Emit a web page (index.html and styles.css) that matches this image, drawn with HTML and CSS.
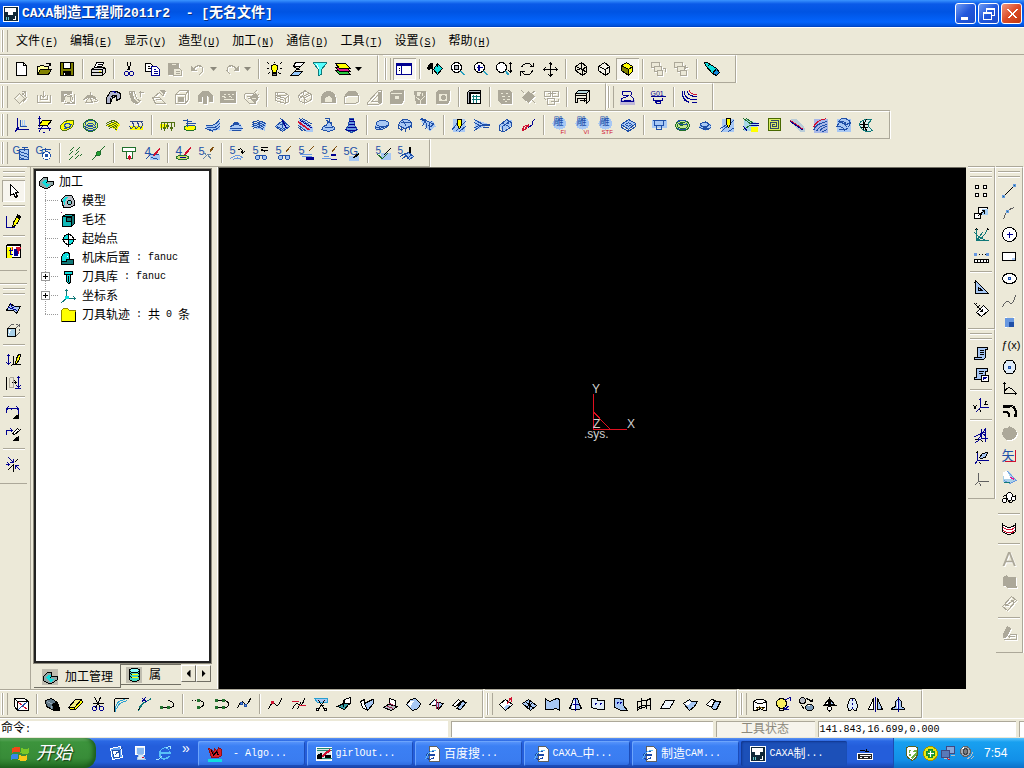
FILE: index.html
```
<!DOCTYPE html>
<html lang="zh-CN">
<head>
    <meta charset="UTF-8">
    <meta name="viewport" content="width=device-width, initial-scale=1.0">
    <title>CAXA制造工程师2011r2</title>
    <link rel="stylesheet" href="styles.css">
</head>
<body>
    <header class="title-bar">
        <span class="app-icon" data-icon="app"></span>
        <h1 class="title">CAXA<span class="zh">制造工程师</span>2011r2&nbsp; - [<span class="zh">无名文件</span>]</h1>
        <button class="win-button" aria-label="最小化" data-icon="winMin"></button>
        <button class="win-button" aria-label="还原" data-icon="winRestore"></button>
        <button class="win-button close" aria-label="关闭" data-icon="winClose"></button>
    </header>

    <nav class="menu-bar">
        <span class="grip"></span>
        <button class="menu">文件<span class="en">(<u>F</u>)</span></button>
        <button class="menu">编辑<span class="en">(<u>E</u>)</span></button>
        <button class="menu">显示<span class="en">(<u>V</u>)</span></button>
        <button class="menu">造型<span class="en">(<u>U</u>)</span></button>
        <button class="menu">加工<span class="en">(<u>N</u>)</span></button>
        <button class="menu">通信<span class="en">(<u>D</u>)</span></button>
        <button class="menu">工具<span class="en">(<u>T</u>)</span></button>
        <button class="menu">设置<span class="en">(<u>S</u>)</span></button>
        <button class="menu">帮助<span class="en">(<u>H</u>)</span></button>
    </nav>

    <div class="toolbar-row spaced">
        <div class="toolbar" data-tools="new open save | print | cut copy !paste !undo^ !redo^ | bulb layer funnel colors^"></div>
        <div class="toolbar" data-tools="*window | redraw zoomFit zoomIn zoomDyn rotate pan | wire hidden *shade | !cascadeA !cascadeB | torch"></div>
    </div>
    <div class="toolbar-row">
        <div class="toolbar" data-tools="!exDiamond !exCut !exRev !exFan loft !sweep !exUp !box !fillet !film !chamfer | !slab !gem !dome !shell !rib !pocket !draftA !hole | table | !dotsA !rhomb !gridBox | mould"></div>
        <div class="toolbar" data-tools="wedge | g01 | bend"></div>
    </div>
    <div class="toolbar-row">
        <div class="toolbar" data-tools="axes planes disc spiral layers hooks | drops cup swoop dome3 waves pyramid stripes hat tower | coins crown fan | pen mesh bars squig | carveF carveV carveS diamond | cutter rings dome4 penB meshB maze slash arcs folds horn"></div>
    </div>
    <div class="toolbar-row">
        <div class="toolbar" data-tools="gDrill gWheel | hatch dotLine | tee four | fourEye five | fiveArc fiveGlasses fiveEyes fiveStep fiveFlat fiveG | fiveCheck fiveBrush"></div>
    </div>

    <main class="workspace">
        <div class="side">
            <div class="toolbar vertical" data-tools="*pointer | sketch | logoT"></div>
            <div class="toolbar vertical" data-tools="patch cube | dimPen dimMove | dimAngle dimEdit | converge"></div>
        </div>

        <section class="dock">
            <div class="tree-box">
                <div class="tree-root"><span data-icon="part"></span>加工</div>
                <ul class="tree">
                    <li><span data-icon="model"></span>模型</li>
                    <li><span data-icon="blank"></span>毛坯</li>
                    <li><span data-icon="target"></span>起始点</li>
                    <li><span data-icon="machine"></span>机床后置<span class="en"> : fanuc</span></li>
                    <li><button class="expander" aria-label="展开刀具库"></button><span data-icon="tool"></span>刀具库<span class="en"> : fanuc</span></li>
                    <li><button class="expander" aria-label="展开坐标系"></button><span data-icon="coords"></span>坐标系</li>
                    <li><span data-icon="folder"></span>刀具轨迹<span class="en"> : </span>共<span class="en"> 0 </span>条</li>
                </ul>
            </div>
            <div class="tabs">
                <button class="tab active"><span data-icon="part"></span>加工管理</button>
                <button class="tab"><span data-icon="stack"></span>属</button>
                <button class="tab-arrow" aria-label="向左"><span class="arrow left"></span></button>
                <button class="tab-arrow" aria-label="向右"><span class="arrow right"></span></button>
            </div>
        </section>

        <section class="viewport">
            <svg class="origin" viewBox="0 0 120 120" width="120" height="120">
                <path d="M60.5 25V60.5H94M60.5 43L77 60" />
                <text x="59" y="24">Y</text>
                <text x="94" y="59">X</text>
                <text x="60" y="59">Z</text>
                <text x="51" y="69">.sys.</text>
            </svg>
        </section>

        <div class="side right">
            <div class="side-column">
                <div class="toolbar vertical" data-tools="array scale curves measure | square ruler"></div>
                <div class="toolbar vertical" data-tools="script scriptEdit | ucs | ucsSplit ucsPick ucsDim"></div>
            </div>
            <div class="side-column">
                <div class="toolbar vertical" data-tools="line arc circle rect ellipse spline point fx polygon conic offset !region vector project helix | surfaceB | !letterA !blob !tag | !noteDim"></div>
            </div>
        </div>
    </main>

    <div class="toolbar-row bottom">
        <div class="toolbar" data-tools="crossBox | blackBox eraser trim corner trimDot joinA | joinB joinC nurbs | nurbsRed nurbsBar scissors surfA surfB surfC surfD surfE surfF"></div>
        <div class="toolbar" data-tools="planeRed planeNet sheet cone sheetDot sheetCut frame flat leaf twin"></div>
        <div class="toolbar" data-tools="drum bulbMove twoBalls mirrorUp capsule mirror bell"></div>
    </div>

    <div class="status-bar">
        <div class="command">
            <label for="command" class="command-label">命令<span class="en">:</span></label>
            <input id="command" type="text">
        </div>
        <div class="hint"></div>
        <div class="tool-state">工具状态</div>
        <div class="position en">141.843,16.699,0.000</div>
        <div class="status-end"></div>
    </div>

    <footer class="taskbar">
        <button class="start"><span data-icon="flag"></span>开始</button>
        <div class="quick-launch">
            <button aria-label="桌面" data-icon="desktop"></button>
            <button aria-label="信使" data-icon="pda"></button>
            <button aria-label="浏览器" data-icon="ie"></button>
            <span class="more">»</span>
        </div>
        <div class="tasks">
            <button class="task"><span data-icon="redLogo"></span><span class="en"> - Algo...</span></button>
            <button class="task"><span data-icon="chart"></span><span class="en">girlOut...</span></button>
            <button class="task"><span data-icon="iePage"></span>百度搜<span class="en">...</span></button>
            <button class="task"><span data-icon="iePage"></span><span class="en">CAXA_</span>中<span class="en">...</span></button>
            <button class="task"><span data-icon="iePage"></span>制造<span class="en">CAM...</span></button>
            <button class="task active"><span data-icon="app"></span><span class="en">CAXA</span>制<span class="en">...</span></button>
        </div>
        <button class="keyboard" aria-label="输入法" data-icon="keyboard"></button>
        <div class="tray">
            <span data-icon="shield"></span>
            <span data-icon="plusBall"></span>
            <span data-icon="network"></span>
            <span data-icon="speaker"></span>
            <time class="clock">7:54</time>
        </div>
    </footer>

    <script src="icons.js"></script>
</body>
</html>
```
FILE: styles.css
```
* {
    box-sizing: border-box;
}
body {
    margin: 0;
    height: 100vh;
    display: flex;
    flex-direction: column;
    overflow: hidden;
    background-color: #ece9d8;
    color: #000;
    font-family: "Liberation Sans", "Noto Sans CJK SC", sans-serif;
    font-size: 12px;
    line-height: 16px;
}
button {
    padding: 0;
    border: none;
    background: none;
    color: inherit;
    font: inherit;
    white-space: nowrap;
}
svg {
    display: block;
    flex: none;
}
.en {
    font-family: "Liberation Mono", monospace;
    font-size: 10px;
    white-space: pre;
}

/* title bar */
.title-bar {
    flex: none;
    display: flex;
    align-items: center;
    gap: 2px;
    height: 27px;
    padding: 0 2px 0 3px;
    background: linear-gradient(#3a94ff 0, #0a5ae8 4px, #0054e3 12px, #0464fc 22px, #0050d8 26px, #003cb4 27px);
    color: #fff;
}
.title {
    flex: 1;
    margin: 0;
    padding-left: 1px;
    font-family: "Liberation Mono", "Noto Sans CJK SC", monospace;
    font-size: 13px;
    font-weight: bold;
    line-height: 20px;
    text-shadow: 1px 1px 0 #0a3080;
}
.title .zh {
    font-size: 14px;
}
.win-button {
    display: flex;
    align-items: center;
    justify-content: center;
    width: 21px;
    height: 21px;
    border: 1px solid #fff;
    border-radius: 3px;
    background: linear-gradient(135deg, #6f9cf4, #2258dc 50%, #1c4cc8);
}
.win-button.close {
    background: linear-gradient(135deg, #f09880, #dc4c28 50%, #c03810);
}

/* menu */
.menu-bar {
    flex: none;
    display: flex;
    align-items: center;
    height: 28px;
    padding-left: 2px;
    border-top: 1px solid #fff;
    border-bottom: 1px solid #aca899;
}
.menu {
    padding: 1px 6px 0;
}

/* toolbars */
.grip {
    flex: none;
    width: 6px;
    height: 22px;
    margin-right: 2px;
    border: solid #aca899;
    border-width: 0 1px;
    box-shadow: inset 1px 0 0 #fff, inset -2px 0 0 #ece9d8, -1px 0 0 #fff;
}
.toolbar-row {
    flex: none;
    display: flex;
    height: 28px;
}
.toolbar-row.spaced {
    gap: 5px;
}
.toolbar-row.bottom {
    gap: 2px;
}
.toolbar {
    display: flex;
    align-items: center;
    padding: 0 11px 0 2px;
    border-top: 1px solid #fff;
    border-right: 1px solid #aca899;
    border-bottom: 1px solid #aca899;
    box-shadow: 0 -1px 0 #aca899, 1px 0 0 #fff;
}
.tool {
    display: flex;
    align-items: center;
    height: 22px;
    padding: 0 4px 0 3px;
}
.tool[aria-pressed="true"] {
    background-color: #f7f5ee;
    box-shadow: inset 1px 1px 0 #aca899, inset -1px -1px 0 #fff;
}
.tool:disabled svg {
    filter: drop-shadow(1px 1px 0 #fff);
}
.tool .arrow {
    margin-left: 4px;
}
.tool:disabled .arrow {
    color: #8c897c;
}
.tool.drop {
    width: 34px;
    padding-right: 0;
}
.separator {
    width: 2px;
    height: 20px;
    margin: 0 3px;
    border-left: 1px solid #aca899;
    border-right: 1px solid #fff;
}
.arrow {
    display: block;
    width: 7px;
    height: 4px;
    background-color: currentColor;
    clip-path: polygon(0 0, 100% 0, 50% 100%);
}
.arrow.left,
.arrow.right {
    width: 4px;
    height: 8px;
    clip-path: polygon(100% 0, 100% 100%, 0 50%);
}
.arrow.right {
    clip-path: polygon(0 0, 100% 50%, 0 100%);
}
.toolbar.vertical {
    flex-direction: column;
    width: 27px;
    padding: 3px 0 8px;
}
.vertical .grip {
    width: 22px;
    height: 6px;
    margin: 0 0 3px;
    border-width: 1px 0;
    box-shadow: inset 0 1px 0 #fff, 0 1px 0 #fff;
}
.vertical .separator {
    width: 22px;
    height: 2px;
    margin: 3px 0;
    border: solid;
    border-width: 1px 0;
    border-color: #aca899 #fff #fff;
}

/* workspace */
.workspace {
    flex: 1;
    min-height: 0;
    display: flex;
}
.side {
    flex: none;
    display: flex;
    flex-direction: column;
    gap: 13px;
    width: 30px;
}
.side > .toolbar {
    border-right: none;
    box-shadow: 0 -1px 0 #aca899;
}
.side.right {
    flex-direction: row;
    gap: 1px;
    width: 58px;
    padding-left: 2px;
}
.dock {
    flex: none;
    display: flex;
    flex-direction: column;
    width: 188px;
    padding: 2px 6px 2px 3px;
    border-left: 1px solid #aca899;
    border-right: 1px solid #fff;
}
.tree-box {
    flex: 1;
    padding: 1px 0 0 1px;
    background-color: #fff;
    border: 2px solid #222;
    outline: 1px solid #8c897c;
}
.tree-root,
.tree li {
    display: flex;
    align-items: center;
    height: 19px;
}
.tree-root {
    gap: 5px;
    padding-left: 1px;
}
.tree {
    position: relative;
    margin: 0 0 0 8px;
    padding: 0;
    list-style: none;
}
.tree::before {
    content: "";
    position: absolute;
    top: 0;
    bottom: 10px;
    left: 0;
    border-left: 1px dotted #999;
}
.tree li {
    position: relative;
    padding-left: 15px;
}
.tree li::before {
    content: "";
    position: absolute;
    left: 0;
    top: 9px;
    width: 13px;
    border-top: 1px dotted #999;
}
.tree [data-icon] {
    margin-right: 6px;
}
.expander {
    position: absolute;
    left: -4px;
    top: 5px;
    width: 9px;
    height: 9px;
    border: 1px solid #999;
    background: linear-gradient(#000, #000) center / 5px 1px no-repeat, linear-gradient(#000, #000) center / 1px 5px no-repeat, #fff;
}
.tabs {
    flex: none;
    display: flex;
    align-items: flex-start;
    height: 25px;
    padding-top: 1px;
}
.tab {
    display: flex;
    align-items: center;
    gap: 7px;
    height: 21px;
    padding: 2px 7px 0 8px;
    border-right: 1px solid #716f64;
    border-bottom: 1px solid #716f64;
}
.tab [data-icon] {
    background-color: #c0bdb0;
}
.tab:not(.active) {
    flex: 1;
    padding: 0 5px;
    border-right: none;
    border-top: 1px solid #716f64;
}
.tab.active {
    height: 24px;
}
.tab-arrow {
    display: flex;
    align-items: center;
    justify-content: center;
    width: 15px;
    height: 17px;
    margin-top: 1px;
    border: 1px solid;
    border-color: #fff #716f64 #716f64 #fff;
}
.viewport {
    flex: 1;
    display: flex;
    align-items: center;
    justify-content: center;
    margin-bottom: 1px;
    background-color: #000;
    border-left: 1px solid #716f64;
    border-top: 1px solid #716f64;
}
.origin path {
    fill: none;
    stroke: #e01020;
    shape-rendering: crispEdges;
}
.origin text {
    fill: #d0d0d0;
    font-size: 12px;
}

/* status bar */
.status-bar {
    flex: none;
    display: flex;
    gap: 3px;
    height: 20px;
    padding: 2px 0 1px;
    border-top: 1px solid #fff;
}
.command {
    flex: 450;
    display: flex;
    align-items: center;
    padding-left: 1px;
    background-color: #fff;
}
.command input {
    flex: 1;
    min-width: 0;
    height: 16px;
    padding: 0 2px;
    border: none;
    outline: none;
    font: inherit;
}
.hint,
.tool-state,
.position,
.status-end {
    border-left: 1px solid #aca899;
    border-top: 1px solid #aca899;
    background-color: #fff;
    line-height: 15px;
}
.hint {
    flex: 263;
}
.tool-state {
    flex: 75;
    padding-left: 24px;
    background-color: #f6f4ec;
    color: #8c897c;
}
.position {
    flex: 198;
}
.status-end {
    width: 5px;
}

/* taskbar */
.taskbar {
    flex: none;
    display: flex;
    align-items: stretch;
    height: 30px;
    background: linear-gradient(#5c94f4 0, #2a68e4 3px, #245edb 8px, #245edb 24px, #1941a5 30px);
    color: #fff;
}
.start {
    display: flex;
    align-items: center;
    gap: 8px;
    width: 96px;
    padding-left: 12px;
    border-radius: 0 10px 12px 0;
    background: linear-gradient(#6cb46c 0, #3c943c 4px, #388c38 20px, #226c22 30px);
    box-shadow: inset -3px -1px 4px #1c5c1c;
    font-size: 18px;
    font-style: italic;
    text-shadow: 1px 1px 1px #143c14;
}
.quick-launch {
    display: flex;
    align-items: center;
    gap: 8px;
    width: 102px;
    padding-left: 12px;
}
.more {
    padding: 0 0 10px 2px;
    font-size: 14px;
}
.tasks {
    flex: 1;
    display: flex;
    gap: 2px;
    padding: 3px 0 2px;
}
.task {
    flex: 1 1 0;
    min-width: 0;
    display: flex;
    align-items: center;
    padding-left: 9px;
    overflow: hidden;
    border-radius: 2px;
    background: linear-gradient(#5c98fc, #3c80f4 5px, #3a7cf0 20px, #2c68dc);
    box-shadow: inset 1px 1px 0 #6ca4fc, inset -1px -1px 0 #1c4cb8;
}
.task [data-icon] {
    margin-right: 4px;
}
.task.active {
    background: #1c50b8;
    box-shadow: inset 1px 1px 2px #10348c;
}
.keyboard {
    width: 46px;
    padding-left: 10px;
}
.tray {
    display: flex;
    align-items: center;
    gap: 2px;
    width: 131px;
    padding-left: 10px;
    border-left: 1px solid #1c4cb0;
    background: linear-gradient(#5cc4fc 0, #18a0f0 4px, #1290e8 22px, #0c70c8 30px);
}
.clock {
    padding-left: 8px;
    font-family: "Liberation Sans", sans-serif;
    font-size: 12px;
}
```
FILE: icons.js
```
// every icon is a list of shapes: "stroke fill shape", separated by ";"
// a shape is a path, "O cx cy rx ry" for an ellipse, or "T size x y text"
const ink = {
    k: '#000', w: '#fff', g: '#aca899', n: '#000090', b: '#2050a8', p: '#a8c8f4', q: '#6898e0',
    y: '#ffff00', r: '#d01030', c: '#10dede', t: '#107878', e: '#20702c', m: '#e01890',
    o: '#808000', s: '#b8bcc4', d: '#606060', h: '#ece9d8', '-': 'none'
};

const icons = {
    app: 'w #102838 M0 0H15V15H0Z;w w M2 2H12V5H9V8H5V5H2Z;w - M12 9V13H9;#6cc - M3 10V13M5 10V13',
    winMin: 'w w M3 11H9V13H3Z',
    winRestore: 'w - M5 5V2H13V9H10M5 3H13;w - M2 6H10V13H2ZM2 7H10',
    winClose: 'w - M3 3L12 12M4 3L13 12M12 3L3 12M13 3L4 12',

    // standard
    new: 'k w M3 1H10L13 4V14H3Z;k - M10 1V4H13',
    open: 'k #ff9 M1 13V5H3L4 4H7L8 5H12V8;k o M1 13L4 8H15L12 13Z;k - M9 3Q12 0 14 4M14 1V4H12',
    save: 'k o M1 1H14V14H1Z;k w M4 1H11V7H4Z;k k M4 10H11V14H4Z;w w M5 11V13',
    print: 'k w M4 6L6 1H13L11 6Z;k - M7 3H11M6 5H10;k #ddd M1 8L4 6H13L15 7V11L12 14H1Z;k - M1 8H12V14M12 8L15 6M1 11H12;y - M8 10H10',
    cut: 'k - M6 0V4L9 9M9 0V4L6 9;n - O 5 12 2 2;n - O 10 12 2 2',
    copy: 'k w M1 2H6L8 4V10H1Z;k - M3 5H5M3 7H6;n w M7 5H12L15 8V14H7Z;n - M9 8H11M9 10H13M9 12H13',
    paste: 'g g M1 2H11V13H1Z;h - M4 3H8;g h M6 7H12L14 9V14H6Z;g - M8 10H12M8 12H12',
    undo: 'g - M1 4V9H6M2 9Q6 2 11 5Q15 9 9 13M2 8Q6 3 10 5;g g M1 5V9H5Z',
    redo: 'g - M14 4V9H9M13 9Q9 2 4 5Q0 9 6 13M13 8Q9 3 5 5;g g M14 5V9H10Z',
    bulb: 'k y M6 11V9Q2 4 8 3Q14 4 10 9V11Z;k #888 M6 12H10V14H6Z;k - M1 1L3 3M8 0V1M15 1L13 3M0 7H2M13 7H15M1 13L3 11M15 13L12 11',
    layer: 'k w M6 1H15L11 5H4Z;k #9cf M5 10H13L9 14H1Z;k - M11 5L5 10M4 5L11 9',
    funnel: 't #5ff M1 1H14V2L9 8V13L6 14V8L1 2Z;w - M4 3L7 8',
    colors: 'k #28c840 M0 9H11L15 13H4Z;k m M0 6H11L15 10H4Z;k y M0 2H10L15 7H4Z',
    window: 'n w M0 2H15V13H0Z;n n M0 2H15V4H0Z;n - M5 4V13;k - M2 7H3M2 9H3',
    redraw: 'k k M0 6L3 2H5V6L1 8Z;k - M5 6V12;k c M6 8L10 2L15 7L10 13Z;k - M10 2V5',
    zoomFit: '#28a0c0 - M10 10L14 14M11 10L15 14;k w O 6 6 5 5;k s M4 4H8V8H4Z',
    zoomIn: '#28a0c0 - M10 10L14 14M11 10L15 14;k w O 6 6 5 5;n - M3 6H9M6 3V9M5 3V9',
    zoomDyn: '#28a0c0 - M9 10L12 14M10 10L13 14;k w O 5 6 5 5;k - M14 1V11M12 3L14 1L15 3M12 9L14 11L15 9',
    rotate: 'k - M2 6Q4 1 10 2L13 5M14 1V5H10M13 9Q11 15 5 13L2 10M1 14V10H5',
    pan: 'k - M8 1V15M1 8H15M6 3L8 1L10 3M6 13L8 15L10 13M3 6L1 8L3 10M13 6L15 8L13 10M7 3H9M7 13H9',
    wire: 'k - M2 5L8 1L13 5V11L9 14L2 9ZM2 5L9 8L13 5M9 8V14M8 1V7L13 11M8 7L2 9',
    hidden: 'k #f4f2e8 M2 5L8 1L13 5V11L9 14L2 9Z;k - M2 5L9 8L13 5M9 8V14',
    shade: 'k y M2 4L7 1L13 5V10L9 14L2 9Z;k o M2 4L9 8V14L2 9Z;k - M9 8L13 5',
    cascadeA: 'g h M1 1H9V6H1Z;g h M4 5H11V10H4Z;g h M7 9H12V14H7Z;g - M12 7H15V10',
    cascadeB: 'g h M1 1H9V6H1Z;g h M4 5H11V10H4Z;g h M7 9H13V14H7Z;g - M12 3V7L15 5',
    torch: 'k c M0 1L3 1L12 7L15 11L12 14L8 12L1 4Z;k #18d M12 7L15 11L12 14L8 12Z;k - M5 3L3 5',

    // features
    exDiamond: 'g - M1 9L6 4L11 9L6 14ZM9 4L13 8L9 13M8 2H12V6M12 2L8 6',
    exCut: 'g - M1 5V13H14V5M4 5V10H11V5M7 1V8M5 6L7 8L9 6',
    exRev: 'g g M2 2H12V4H4V12H2Z;g h O 9 9 4 4;g - M7 7H11V11M12 12L15 14M4 14H15V4',
    exFan: 'g g M1 10Q8 1 14 10L10 8H5Z;g h M3 13L7 7L10 13Z;g - M8 2V6M11 12H14',
    loft: 'k #b0b4cc M2 7L5 2H11L15 4V9L11 11V7L7 8L5 14L1 14V8Z;k - M5 8Q9 4 12 7M5 8V14;n - M7 2L11 3',
    sweep: 'g - M1 2Q2 14 9 14L12 11Q7 11 6 2ZM12 1V7M10 3H15;g g M2 4Q3 13 9 14L8 12Q5 11 4 3Z',
    exUp: 'g - M1 8H8L14 14H4ZM3 7L8 3L12 7M12 1V6M9 2H14M4 10H10;g g M9 1H13V4Z',
    box: 'g - M1 5L5 1H14V10L11 14H1ZM1 5H11V14M11 5L14 1;g g M4 8H9V12H4Z',
    fillet: 'g g M1 12V6L5 2H11L15 6V12H12V8L9 5V14H6V5L4 8V12Z',
    film: 'g g M0 2H15V13H0Z;h - M3 5H5M7 5H9M11 5H13M3 10H13M2 7L6 8M9 7L12 8',
    chamfer: 'g - M1 4H10L13 1M1 4V9L6 14H12V8L15 5M3 7L12 7M4 9H10;g g M7 8L12 4L15 8L11 13Z;h - M8 9H12',
    slab: 'g - M1 3H10L14 6V12L11 14L1 11ZM1 6L11 9L14 6M11 9V14M1 8L10 11M3 3V6H11',
    gem: 'g - M1 6L7 1L14 5V10L7 14L2 11ZM1 6L7 8L14 5M7 8V14M7 1L5 7L10 12M3 8L12 4',
    dome: 'g g M1 13V7Q4 1 10 2Q15 4 15 11V13Z;g h M4 13V9Q9 3 12 9V13Z',
    shell: 'g - M1 12V7Q4 1 9 2H12L15 6V12L12 14H1Z;g g M1 7Q4 1 10 2L15 6H5Z',
    rib: 'g - M1 13L12 1H15V13L12 15H1ZM5 12L12 5V12Z;g g M12 3H15V13H12Z',
    pocket: 'g g M1 3L4 1H14V11L12 14H1Z;g h M5 6H10V10H5Z;h - M1 4H12',
    draftA: 'g g M2 2H13V14H4Z;h h M5 3H8L7 6H5Z;h - M4 8L8 11L12 7M8 11V14M10 3V6',
    hole: 'g g M1 3L3 1H14V11L12 14H1Z;g h M3 4H12V12H3Z;g g O 8 8 2 2',
    table: 'k s M1 3L3 1H14V3H3V14H1Z;k w M4 4H14V14H4Z;t - M5 7H13M5 10H13M7 5V13M10 5V13;k - M14 1L14 14',
    dotsA: 'g g M1 1H12L14 3V14H4L1 11Z;h - M3 4H5M8 4H10M4 7H7M10 7H12M5 10H7M9 10H12M7 12H9',
    rhomb: 'g g M8 2L14 7L8 13L2 8Z;g - M1 1L4 4M15 14L11 10M15 1L11 4',
    gridBox: 'g - M1 2H7V7H1ZM9 2H15V7H9ZM4 9H11V15H4ZM1 9L3 11M4 4H12M7 12H15V9',
    mould: 'k #b8d8dc M1 4L4 1H15L12 4Z;k - M1 4V13H3V9H12V14L15 11V1M12 4V9M1 6H12M5 11H11M9 9L11 11L9 13',
    wedge: '- #c0b8d8 M0 10H15V15H0Z;n - M3 2H10Q14 3 11 6L14 9V12H2Q1 8 6 8L9 6H4Q2 4 3 2M4 11H11',
    g01: 'n - T 7 0 6 G01;n - M0 7H15M3 8V11H12V8M5 12H10V14H6Z',
    bend: 'n - M1 1V5Q2 11 8 13M3 1V4Q4 9 10 10H15M6 1V3Q8 7 15 7M1 7L4 12M10 13H15;r - M8 1Q9 5 15 5',

    // machining
    axes: 'n - M4 0V12H15M1 15L5 10M2 11H5;b - M7 2V9H13;p - M9 2V8H12M11 2V7',
    planes: 'k y M6 3H15L11 8H2Z;n - M3 0V9M2 2L3 0L4 2M1 11H14M2 15L6 9M11 9L14 14M6 15H8',
    disc: '#507010 y M1 11Q0 6 8 3Q16 1 14 7Q12 12 5 13Q2 13 1 11Z;b #dcec80 O 8 8 3 2;b - M4 11Q10 11 12 7',
    spiral: 'e #d8f080 O 8 8 7 6;b - O 8 6 5 3;b - O 8 7 3 1;b - M2 9Q8 13 14 9M3 11Q8 15 13 11',
    layers: '- y M1 8Q8 2 15 7L11 13L4 9Z;#507010 - M1 6Q8 0 14 7M1 8Q8 2 13 9M2 10Q8 4 12 11M3 12Q8 6 11 13',
    hooks: '- y M1 8H14V12H1Z;#304888 - M1 4H14M3 4Q7 8 3 11M8 4Q12 8 8 11M13 4Q15 8 12 11M1 9L3 12M6 9L8 12M11 9L13 12',
    drops: '- y M0 6H8V10H0Z;#507010 - M2 12V5H15V9M5 5V12M8 5V10M12 5V12M4 10L5 12L6 10M7 8L8 10L9 8M11 10L12 12L13 10',
    cup: 'e y M2 12Q0 9 5 8H12Q15 11 11 13H5Z;b - M1 3L10 4M3 6H13M5 1V9M5 8H12',
    swoop: '- p M0 8Q10 9 14 3V12Q8 15 0 11Z;b - M1 8Q10 9 14 2M2 10Q10 12 14 6M3 12Q10 14 14 9M0 11L8 14',
    dome3: '- p M1 13Q2 5 8 4Q14 6 14 13Z;b - M4 7Q8 2 11 7M2 9Q8 5 13 9M1 11H14M3 13H12M5 6H10',
    waves: '- p M0 9Q8 2 15 6L13 13L4 11Z;b - M1 5Q8 1 15 7M1 7Q8 3 14 9M1 9Q8 5 13 11M2 11Q8 7 12 13M8 4V10',
    pyramid: 'b p M1 9L8 3L15 9L8 14Z;b - M8 3V10M3 9L8 12L13 9M5 7L10 7M6 1L11 5;n - M8 3L12 11',
    stripes: '- p M1 3L6 2L15 9V14L9 14L1 8Z;b - M2 1L14 9M1 8L9 14M5 1L15 7M1 10L6 14;r - M1 4L13 13M1 5L12 13;n - M3 3L15 11',
    hat: 'b p M1 12Q3 8 6 8L7 5H10L11 8Q15 10 14 12L8 14Z;b - M4 1H9M9 1V5M6 3L12 6M4 10H12',
    tower: 'b q M6 1H10L11 8L14 12L8 15L2 12L5 8Z;n - M5 4H11M5 7H11M4 10H12M2 12Q8 15 14 12M6 2H10',
    coins: 'b p M1 8V11Q5 15 14 8V5;b p O 8 6 6 3;b - M1 9Q6 13 14 7',
    crown: 'b p M1 8Q2 2 8 2Q15 3 14 8L8 11Z;b - M1 8V11M4 9V13M8 10V14M12 9V12M14 7V10M3 5H13M5 3L9 9M2 11L4 13L6 11',
    fan: '- p M0 3L12 3L15 9L9 14Z;b - M0 2Q9 4 5 12M1 1L14 7M12 3Q6 7 10 13M14 6L9 10M5 2L2 9',
    pen: '- p M1 1H13V14H1Z;b - M0 13L8 3M4 14L14 4M8 14L15 8;k y M6 2H10V8L8 11L6 8Z',
    mesh: '- p M0 2L15 7L0 13Z;b - M0 2L8 7H15M0 5L5 8H15M0 13L8 7M0 10L5 8M4 4L7 6M8 10H14',
    bars: '- p M2 7L9 2H14V8L5 14Z;b - M2 13V8L9 2L11 3V6M5 14V9L12 4L14 5V9L7 14ZM2 13L5 14M5 6L12 9',
    squig: 'r - M2 13L3 9L6 8V11L2 13M4 12L8 7V10L9 11;n - M8 10L12 7Q11 3 15 2',
    carveF: '- p O 8 6 7 6;b - T 10 2 7 雕;r - T 6 9 16 FI',
    carveV: '- p O 8 6 7 6;b - T 10 2 7 雕;r - T 6 9 16 VI',
    carveS: '- p O 8 6 7 6;b - T 10 2 7 雕;r - T 6 4 16 STF',
    diamond: 'b p M1 7L8 2L15 6L8 12Z;b - M1 7V10L8 14L15 9V6M8 12V14M5 7L8 5L11 7L8 9Z',
    cutter: '- p M0 2H15V10H0Z;b - M1 3H14M3 3V8H12V3M5 8V12H10V8',
    rings: 'e #c8e890 O 8 8 7 5;e - O 8 8 5 3;b - M3 4Q8 1 12 4M4 6Q9 9 13 6M3 11Q8 14 12 11;e - O 7 7 2 1',
    dome4: '- p O 8 9 6 4;b - O 7 7 4 2;b - M2 10Q7 13 14 10M3 8Q8 12 11 8M8 4L14 9M5 12H11',
    penB: '- p M1 1H13V14H1Z;b - M0 11L8 6M1 14L14 2M8 14L14 10;k y M6 1H10V7L8 10L6 7Z',
    meshB: '- #a8d8e8 M0 1L15 6L11 13L0 14Z;- y M7 9H14V14H7Z;e - M0 1L8 7M3 1L10 6M0 12L8 7;n - M7 6H15M7 8H15M0 9L4 14',
    maze: '#486800 #d8ec60 M2 1H14V13H2Z;#304868 - M4 3H12V11H4V5H10V9H6V7H8',
    slash: '- #b8ccd8 M1 1H7L15 10V14H10L1 5Z;r - M1 3L14 12;n - M1 4L14 13',
    arcs: '- #a8b8e8 M1 1H15V15H1Z;r - M1 10Q3 3 14 1;b - M1 13Q3 6 15 4M4 14Q6 8 15 7M7 14Q9 10 15 9M10 14L15 12',
    folds: '- p M1 1H15V14H1Z;b - M3 4L6 1Q12 0 15 5L11 7Q9 3 3 4M1 9L4 5Q10 5 11 10M1 9Q7 8 9 13L13 10L15 5M3 12H9',
    horn: 't #d8ecec M1 7Q2 1 13 2L10 6Q9 9 14 13L11 14Q2 14 1 7Z;k - M8 2Q3 8 9 14M5 3V12M1 7H9M2 10H9;t - M12 3L9 6',

    gDrill: 'b - T 10 -1 8 G;b p M6 4H15V14H6Z;b - M6 6L15 9M6 9L15 12M6 12L12 14M11 1V5M8 2H14',
    gWheel: 'b - T 10 -1 8 G;b w O 10 10 4 4;b b O 10 10 1 1;b - M9 2V5M5 4H14',
    hatch: 'e - M2 6L6 2M8 6L12 2M1 10L5 6M7 10L11 6M1 15L5 11M7 14L11 10M12 11L14 9',
    dotLine: 'e - M1 15L14 1;e #20a030 O 8 8 2 2',
    tee: 'e w M1 2H14V6H11V13H5V6H1Z;e - M4 6H12;r r O 8 12 1 2',
    four: 'b - T 12 0 10 4;- p M5 9H15V14H5Z;b - M1 14L6 9H14M7 12L14 14;r - M8 11L15 3M9 11L15 4',
    fourEye: 'b - T 12 0 9 4;e #d0e070 O 7 12 6 2;n - M4 12H10;r - M8 10L15 2M9 10L15 3',
    five: 'b - T 11 0 9 5;#805010 - M11 7L15 2M11 6L14 2;#6888a8 - M4 14L9 9L13 14M9 9H12M8 9L6 8',
    fiveArc: 'b - T 11 0 8 5;k - M9 4Q13 2 13 7M12 6L13 8L15 6;q - M1 13L6 10L10 10L14 13M4 14Q8 11 12 14',
    fiveGlasses: 'b - T 11 0 8 5;k - M8 2H15M8 5H15M9 4L13 6;b p O 5 12 2 2;b p O 12 12 2 2;b - M4 10H13',
    fiveEyes: 'b - T 11 0 8 5;b p O 5 12 2 2;b p O 12 12 2 2;b - M3 10H14;#805010 - M10 7L15 1',
    fiveStep: 'b - T 11 0 8 5;#805010 - M10 6L15 1;n n M8 12H15V14H8Z;q - M1 9H9M3 11H13M7 9H13',
    fiveFlat: 'b - T 11 0 8 5;#805010 - M10 7L15 1;n n M10 9H14V10H10Z;q - M0 13H9M2 11H7;n - M9 14H15',
    fiveG: 'b - T 11 -1 9 5G;- p M4 10H14V15H4Z;k - M9 12L15 7M10 12L15 8',
    fiveCheck: 'b - T 10 0 8 5;- p M5 7H15V14H5Z;e - M2 9L7 13L12 8M4 11L8 14;k - M8 10L15 3',
    fiveBrush: 'b - T 10 -1 8 5;k - M11 1V8M12 1V8;b p M6 9L10 7L15 11L11 14Z;b - M2 11L6 8L11 14M4 13L9 9M8 14L13 9',

    // left side
    pointer: 'k w M5 1V12L8 10L10 14L12 13L10 9H13Z',
    sketch: 'n - M1 2V14H9;k y M7 14L8 9L12 2L15 4L11 11Z;k k M12 1L15 3L14 5L11 4Z',
    logoT: 'k w M1 2H15V14H1Z;- y M1 3H6V14H1Z;n n M9 6H12V12H9Z;r r M11 4H15L13 9Z;n - M3 7H7M5 4V11H7;r - M7 3V6;k - M1 1H15M1 2H15',
    patch: 'k p M1 10L5 3L9 6L15 6L11 13L8 10Z;n - M3 7L12 10M5 3L8 10M9 6L6 9',
    cube: 'k #a8d0e8 M2 6H10V14H2Z;- w M3 7H6L3 12Z;d - M2 6L6 2H8M10 2H12M14 2V4M14 6V8M14 10L10 14M10 6L14 2',
    dimPen: 'n - M3 2V12M1 4L3 2L5 4M1 10L3 12L5 10;k - M8 3V12H15;k y M10 11L11 6L13 2H15L14 7L11 11Z;k - M5 14L7 12',
    dimMove: 'k - M1 2V15M6 8H11M9 6L11 8L9 10;g - M4 3V13M8 3V13M4 3H8M4 13H8;n - M13 2V13M11 4L13 2L15 4M11 11L13 13L15 11M9 14H15',
    dimAngle: 'n - M1 8V4H13V10M3 2L1 4L3 6M11 2L13 4L11 6M6 3V5;k k M8 14H13V10Z',
    dimEdit: 'n - M1 8V4H7M5 2L7 4L5 6;k w M7 7L12 2L14 4L9 8Z;k k M8 14H13V10Z;k - M11 7L15 3',
    converge: 'n - M3 1L8 6M8 2V6H4M0 8H4M2 6L4 8L2 10M15 14L10 9M10 12V9H13;k - M8 8V15M8 8L2 14M12 3L9 6',

    // tree
    part: 'k #90a8a8 M1 7L5 3H9V7H15V10L9 14H6L1 11Z;- c M4 8L6 5H8V9H12L9 12H7Z;k - M9 7L7 9',
    model: 'k s M1 6L5 2L11 2L14 7V12L9 14H3Z;- c M2 6L5 3H8L5 7L4 11Z;k #7cc O 9 9 2 2',
    blank: 'k #10b8b8 M2 4L5 2H14V11L11 14H2Z;k t M11 4L14 2V11L11 14Z;k t M6 5H11V9H6Z;k - M2 4H11;#902060 - M0 0H1',
    target: 'k w O 8 8 5 5;k c M8 3Q3 3 3 8H8Z;k c M8 8H13Q13 13 8 13Z;k - M8 1V15M1 8H15',
    machine: 'k c M3 3Q8 0 9 4V10H13V14H1V6Z;k t M6 9H13V14H1V11H6Z;w - M6 6H7',
    tool: 'k c M4 2H12V5H4Z;k c M6 5H10V13L8 14L6 12Z;k - M8 6V12',
    coords: 't - M6 1V10H15M6 10L1 14M4 3L6 1L8 3M13 8L15 10L13 12;c c M5 8H8V10H5Z',
    folder: '#908800 y M1 14V3L3 1H7L9 3H15V14Z;k - M1 14H15V4',
    stack: 'k #40d8c0 M3 3V12Q8 16 13 12V3;k #8ff O 8 3 5 2;k - M3 6Q8 9 13 6M3 9Q8 12 13 9;y - M5 7H11;y - M5 10H11',

    // right side
    array: 'k w M2 2H5V5H2ZM10 2H13V5H10ZM2 10H5V13H2ZM10 10H13V13H10Z',
    scale: 'k w M5 2H14V9H5Z;- #a8d0f4 M8 3H14V9H8Z;k w M1 8H7V13H1Z;k - M5 10L11 5M8 5H11V8',
    curves: 't - M3 1V13H15M3 13Q9 12 14 2M1 5L5 9L12 13M3 13L9 5;k - M1 3L3 1L5 3M14 1L15 3',
    measure: 'k w M1 10H15V13H1Z;k - M4 10V13M7 10V13M10 10V13M13 10V13M5 5H6M8 5H9M11 5H12;q q M1 4H3V6H1ZM13 4H15V6H13Z',
    square: 'k p M2 1V14H15ZM5 8V11H9Z;k - M1 14H15M1 3L4 1',
    ruler: 'k w M3 11L10 4L15 9L8 15Z;k - M1 2L9 10M3 7L6 4M1 4L3 2M9 7V10H6',
    script: 'k p M4 2H14V4H12V12Q11 14 8 14H1V12H4Z;k - M6 5H10M6 7H10M6 9H10M4 12H8',
    scriptEdit: 'k p M3 1H14V4H12V12H1V10H3Z;k - M5 4H10M5 6H9;k w M8 8H15V14H8Z;n - M10 10L13 12M13 10H10V12',
    ucs: 'n - M7 1V10H15M7 10L2 15M5 3L7 1;k - M0 8L3 12M3 8L0 12M11 4H13L11 7H14M6 12L8 15',
    ucsSplit: 'n - M8 1V11H14M8 11L2 15M1 9L13 4M4 13L12 1L12 14M9 6L13 9;k - M8 13L10 15M1 12H4',
    ucsPick: 'n - M4 2V11H15M4 11L1 15;k p M6 8L9 4L14 3L12 8L7 9Z;k - M6 13L8 15M3 4L4 2',
    ucsDim: 'd - M5 1V10H15M5 10L1 14M6 12L8 15',

    // curves
    line: 'k - M2 13L13 2;q t O 2 13 1 1;q t O 13 2 1 1',
    arc: 'd - M2 14Q4 4 13 2;q t O 6 6 1 1',
    circle: 'k w O 8 7 7 7;n - M5 7H11M8 4V10',
    rect: 'k w M1 3H14V11H1Z;p p M11 9H13V10H11Z',
    ellipse: 'k w O 8 7 7 5;b p O 8 7 1 1',
    spline: 'd - M1 14Q4 6 8 9Q12 12 14 2',
    point: 'q q M4 3H12V11H4Z;b b M8 7H12V11H8Z;w - M3 2H5M11 2H13M3 12H5',
    fx: 'k - T 11 0 11 ƒ(x)',
    polygon: 'k #e0ecf8 M5 1H11L14 5V10L11 14H5L2 10V5Z;b q O 8 8 1 1',
    conic: 'k - M3 1V12H15M1 3L3 1L5 3M13 10L15 12L13 14M3 11Q6 2 13 10',
    offset: 'k - M1 3H9Q14 4 14 10V13M1 2H10Q15 3 15 10V13M1 4H8M13 10V13M1 8H5Q8 8 8 13M1 9H5Q7 9 7 13',
    region: 'g g M1 8Q2 2 6 3L8 1L13 4L15 8Q13 14 8 14Q2 14 1 8Z',
    vector: 'b - T 13 0 12 矢;r - M14 2V14H3',
    project: '- #a8d0e8 M1 3L7 1L15 11L8 14L2 12Z;- w M1 3L5 1L9 9L3 9Z;q - M6 2L15 11L8 14M3 11L8 14;m - M9 8L13 10;t - M2 13H8',
    helix: 'k w O 8 5 3 4;k w O 3 9 2 2;k - M1 6Q4 2 6 7Q8 13 11 10Q14 8 14 3;k w O 12 7 2 2',
    surfaceB: 'k w M1 3Q8 9 14 3V10Q8 16 1 10Z;r - M2 6Q8 11 13 6M2 9Q8 14 13 9;k - M1 1V10M14 1V10',
    letterA: 'g - T 20 1 14 A',
    blob: 'g g M2 4L5 2L6 4H14V11L15 14H6L4 12H2V8Z',
    tag: 'g - M1 11L10 1L15 5L6 15ZM4 10L12 5M4 7V10H7M9 5H12V8',
    noteDim: 'g g M2 9L6 1L9 3L5 11L2 12Z;g - M2 14H15V9H8M4 12V9M13 11H7M9 9L7 11L9 13',

    // bottom
    crossBox: 'k w M1 2H11L15 5V14H4L1 10Z;k - M1 2L4 5H15M4 5V14;r - M5 6L14 13;b - M5 13L14 5',
    blackBox: 'k #607888 M1 4L7 2L13 6L15 12V14L10 14L2 10Z;k k M8 8L12 6L15 14H10Z;#9ab - M3 5L8 8M7 9V12',
    eraser: 'k y M1 11L8 3H14L15 6L8 13H3Z;k #f4ee80 M1 11L8 3H14L7 11Z;k - M7 11V13',
    trim: 'k - M4 1L10 11M10 1L5 12M2 7H13;n - O 4 12 2 2;n - O 11 12 2 2',
    corner: 'k - M1 15V2M1 2H15;#28a0d0 - M2 15V11Q3 4 12 3M3 13Q4 6 14 4',
    trimDot: 't - M2 15Q4 7 15 2M2 12L7 6;n - M6 2L11 6M9 1L5 6;k - M1 14L3 12',
    joinA: 'k - M1 11H10Q15 11 14 7Q13 5 9 4;e e O 2 11 1 1;e e O 9 11 1 1',
    joinB: 'k - M9 4Q14 5 13 8Q12 11 8 11M1 4H2M4 4H5;e e O 8 4 1 1;e e O 8 11 1 1',
    joinC: 'k - M1 4H10Q15 4 15 8Q15 11 11 11H1;e e O 3 4 1 1;e e O 10 4 1 1;e e O 3 11 1 1;e e O 10 11 1 1',
    nurbs: 'k - M1 12Q5 2 8 7Q10 11 14 2;b q O 5 7 1 1;b q O 9 9 1 1',
    nurbsRed: 'k - M1 13Q5 3 8 8Q11 11 14 2;r r O 5 6 1 1',
    nurbsBar: 'k - M2 13Q5 5 8 8Q11 12 14 2M7 13L10 6;r - M1 5H8M8 9H15',
    scissors: '#28a0d0 p M1 2H14V6H4Z;k - M5 4L11 13M11 4L5 13M6 9H10;k w O 4 13 1 1;k w O 12 13 1 1',
    surfA: 'k w M8 3L14 1V7L9 10Z;k #38a0a8 M1 10L7 7H13L8 13Z;k - M7 3V10',
    surfB: 'k w M1 5L5 3V7L10 4L14 3V7L8 14L3 11Z;k p M5 7L14 3V7L8 14Z',
    surfC: 'k w M7 2L13 4V10L7 8Z;k s M1 11L6 8L15 10L9 14Z;#a02050 - M7 7L12 9M5 10L11 12',
    surfD: 'k p M1 8L5 3L10 2L15 7L13 12L7 14Z;- w M2 8L5 4L8 5L5 10Z',
    surfE: 'k p M1 8L6 3L9 6L15 7L10 13L7 9Z;- w M2 8L6 4L8 6L5 9Z;#a02050 - M8 2V12M10 5V12',
    surfF: 'k w M1 9L7 3L9 5L4 10Z;k p M5 12L11 5L15 6L9 13Z;k - M4 10L13 3',
    planeRed: 'k w M1 8L7 3L14 8L7 14Z;- p M8 8L13 8L7 13L5 11Z;r - M8 8L13 1M10 2H13V5',
    planeNet: 'k p M1 7L7 3L15 9L9 14Z;k - M4 5L12 12M11 6L5 11M8 3V13',
    sheet: 'k p M1 2Q4 6 8 4Q12 1 15 3V14Q12 11 8 13Q4 14 1 13Z;k - M1 2V13',
    cone: 'k p M6 2H10L12 8L14 12Q8 15 2 12L4 8Z;- w M6 4H8V12H4Z;n - M8 1V14M5 8H11',
    sheetDot: 'k #e0ecf8 M1 2H7V4H14V13H8L1 11Z;n - M4 7H6M5 6V8M9 7H11M10 6V8',
    sheetCut: 'k p M1 2H7V3H10V9L14 14H8L1 11Z;n - M3 6H5M4 5V7M6 6H8M7 5V7',
    frame: 'k - M1 14V4M5 12V1M10 12V3M14 13V1M1 5L10 4L14 2M1 12L5 9H14M1 13L10 10',
    flat: 'k #eef4fa M1 12L6 4H15L10 12Z',
    leaf: 'k p M1 7L7 3L9 5H15L12 10L7 14Z;- w M2 7L7 4L8 6L5 9Z',
    twin: 'k w M1 8L6 3L10 4L6 11Z;k p M6 11L9 5L15 5L11 13H8Z',
    drum: 'k w M1 5Q8 0 14 5V14H11L8 12L4 14H1Z;k - M1 5Q8 9 14 5M3 11H12;#806000 - M3 14L7 10L12 13',
    bulbMove: 'k #f8f060 O 6 7 5 5;k - M4 12V14H8V12;n - M10 3L15 1M13 1H15V4M9 13L14 9M9 10V13H13',
    twoBalls: 'k s O 4 4 3 3;k #7a9ab8 O 11 11 4 3;k - M8 2L14 5M14 2V5H11M3 9L6 13;w - M9 9H11',
    mirrorUp: 'k w M3 8L7 3V8Z;k p M9 3L13 8H9Z;k - M1 9H15M8 0V15;k w O 8 12 2 2',
    capsule: 'k #e0ecf8 M4 14L3 9L5 3Q8 0 11 3L13 9L12 14H10L8 12L6 14Z;n - M8 2V4M8 6V8M8 10V12',
    mirror: 'k w M6 2V13H1Z;k p M10 2V13H15Z;n - M8 0V15',
    bell: 'k p M5 5Q8 1 11 5V10L14 12V13H1V12L5 10Z;- w M6 5H8V11H6Z;n - M8 0V15',

    // taskbar
    flag: '- #f04818 M0 3Q4 0 8 2L7 7Q3 5 -1 8Z;- #78c828 M9 2Q13 5 17 2L16 8Q11 10 8 7Z;- #3888e8 M-1 9Q3 7 6 9L5 14Q2 12 -2 15Z;- #f8c818 M7 9Q11 12 15 9L14 15Q9 17 6 14Z',
    desktop: 'w #5c9cf0 M2 3L12 1L14 12L4 14Z;b w M4 5H11V12H5Z;b - M6 10L14 2M7 7H10',
    pda: 'w #e8f0f8 M3 1H12V9H3Z;- #88b8f0 M4 2H11V8H4Z;#a8c8e8 #dce8f4 M6 9H10L13 14H5Z;r - M9 12H11',
    ie: '#58c0f8 - M13 5Q9 0 5 4Q1 8 4 12Q8 16 13 11M4 8H14M4 7H14M13 5V8M5 4Q2 8 5 12Q8 15 12 11;#a8e4ff - M0 14Q2 15 5 11M10 2Q16 -1 14 4',
    redLogo: '#8c1018 #d82028 M1 2L4 3L6 7L7 2L10 5L11 1L14 3V9L11 11H4Z;k - M4 4L6 9L9 5L11 9;c c M1 13H14V15H1Z',
    chart: 'w #d8e8e8 M0 1H15V14H0Z;#208870 - M0 2H15M0 4H15M0 12H15;r - M4 11L14 2M5 11L15 3;k k M1 9L5 7V12H1ZM9 9H14V11H9Z',
    iePage: 'd w M5 0H12L15 3V15H5Z;#1848a8 - M10 6Q7 3 4 6Q0 9 3 12Q6 14 10 11M3 9H10V7M2 8H10;#60b8f0 - M1 13Q4 3 12 4',
    keyboard: 'w #222 M0 8H15V14H0Z;w - M2 10H13M2 12H4M6 12H10M12 12H13;k - M3 5L12 6M9 3V6',
    shield: '#586020 w M2 2Q8 0 13 2V9Q12 13 8 15Q3 13 2 9Z;- #70b040 M4 4H12V9L8 13Q5 12 4 9Z;w w M9 3L5 8H8L6 12L11 7H8Z',
    plusBall: '#a09000 #e8e810 O 8 8 7 7;#188830 #28a838 M6 4H10V6H12V10H10V12H6V10H4V6H6Z;w - M5 8H11M8 5V11',
    network: '#404880 #88a8d8 M6 1H14V8H6Z;#404880 #5878b8 M1 5H9V12H1Z;s - M3 13H8M10 10H14;r - M7 13L10 15',
    speaker: '#606468 #a8acb0 O 7 6 5 5;#404448 #787c80 O 7 6 2 3;w - M4 3L6 2;s - M9 13Q14 11 14 6M12 14L15 11'
};

function drawIcon(name) {
    const shapes = icons[name].split(';').map(function(part) {
        const bits = part.split(' ');
        const stroke = ink[bits[0]] || bits[0];
        const fill = ink[bits[1]] || bits[1];
        const paint = 'stroke="' + stroke + '" fill="' + fill + '"';
        if (bits[2] === 'O') {
            return '<ellipse cx="' + bits[3] + '" cy="' + bits[4] + '" rx="' + bits[5] + '" ry="' + bits[6] + '" ' + paint + '/>';
        }
        if (bits[2] === 'T') {
            return '<text x="' + bits[4] + '" y="' + bits[5] + '" font-size="' + bits[3] + '" fill="' + stroke + '">' + bits[6] + '</text>';
        }
        return '<path d="' + bits.slice(2).join(' ') + '" ' + paint + '/>';
    });
    return '<svg width="16" height="16" viewBox="-0.5 -0.5 16 16" overflow="visible" shape-rendering="crispEdges">' + shapes.join('') + '</svg>';
}

// "!" disabled, "*" pressed, "^" has a drop-down arrow, "|" separator
function buildTool(item) {
    if (item === '|') {
        return '<span class="separator"></span>';
    }
    const name = item.replace(/[!*^]/g, '');
    const drop = item.endsWith('^');
    return '<button class="tool' + (drop ? ' drop' : '') + '" aria-label="' + name + '"' +
        (item[0] === '!' ? ' disabled' : '') +
        (item[0] === '*' ? ' aria-pressed="true"' : '') + '>' +
        drawIcon(name) + (drop ? '<span class="arrow"></span>' : '') + '</button>';
}

document.querySelectorAll('[data-tools]').forEach(function(bar) {
    bar.innerHTML = '<span class="grip"></span>' + bar.dataset.tools.split(' ').map(buildTool).join('');
});

document.querySelectorAll('[data-icon]').forEach(function(el) {
    el.innerHTML = drawIcon(el.dataset.icon);
});
```
